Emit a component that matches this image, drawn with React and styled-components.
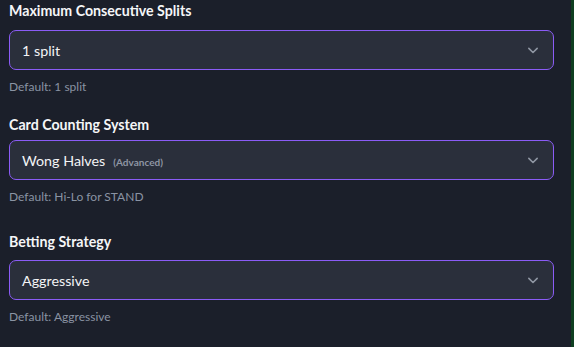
import { useState } from "react";
import styled, { createGlobalStyle } from "styled-components";

const GlobalStyle = createGlobalStyle`
  html, body {
    margin: 0;
    padding: 0;
    background: #1b1f2a;
  }
  body {
    font-family: Lato, "Noto Sans", sans-serif;
    color: #f3f4f6;
  }
`;

const Page = styled.div`
  display: flex;
  height: 347px;
  overflow: hidden;
`;

const Panel = styled.div`
  flex: 1;
  padding: 1px 17px 0 9px;
  display: flex;
  flex-direction: column;
`;

const Edge = styled.div`
  width: 3px;
  background: #0f3f21;
`;

const Field = styled.div`
  display: flex;
  flex-direction: column;
  margin-top: ${(p) => p.$top || 0}px;
`;

const Label = styled.label`
  font-size: 14.2px;
  font-weight: 700;
  line-height: 20px;
  color: #f5f6f8;
  margin-bottom: ${(p) => p.$gap}px;
`;

const SelectBox = styled.div`
  height: 40px;
  box-sizing: border-box;
  border: 1px solid #8b5cf6;
  border-radius: 7px;
  background: #2a2f3b;
  display: flex;
  align-items: center;
  padding: 0 10px 0 12px;
  cursor: pointer;
`;

const Value = styled.span`
  flex: 1;
  font-size: 14.3px;
  color: #f3f4f6;
  display: flex;
  align-items: baseline;
  gap: 8px;
`;

const Tag = styled.span`
  font-size: 10px;
  font-weight: 700;
  color: #8e95a3;
`;

const Chevron = styled.svg`
  width: 20px;
  height: 20px;
  color: #8f96a3;
`;

const Help = styled.p`
  margin: 9px 0 0;
  font-size: 12px;
  line-height: 16px;
  color: #8a93a3;
`;

const fields = [
  { label: "Maximum Consecutive Splits", value: "1 split", help: "Default: 1 split", gap: 9, top: 0 },
  { label: "Card Counting System", value: "Wong Halves", tag: "(Advanced)", help: "Default: Hi-Lo for STAND", gap: 5, top: 20 },
  { label: "Betting Strategy", value: "Aggressive", help: "Default: Aggressive", gap: 8, top: 27 },
];

const App = () => {
  const [items] = useState(fields);

  return (
    <>
      <GlobalStyle />
      <Page>
        <Panel>
          {items.map((f, i) => (
            <Field key={i} $top={f.top}>
              <Label $gap={f.gap}>{f.label}</Label>
              <SelectBox>
                <Value>
                  {f.value}
                  {f.tag && <Tag>{f.tag}</Tag>}
                </Value>
                <Chevron viewBox="0 0 24 24" fill="none" stroke="currentColor" strokeWidth="1.9" strokeLinecap="round" strokeLinejoin="round">
                  <path d="M7 10l5 5 5-5" />
                </Chevron>
              </SelectBox>
              <Help>{f.help}</Help>
            </Field>
          ))}
        </Panel>
        <Edge />
      </Page>
    </>
  );
};

export default App;
